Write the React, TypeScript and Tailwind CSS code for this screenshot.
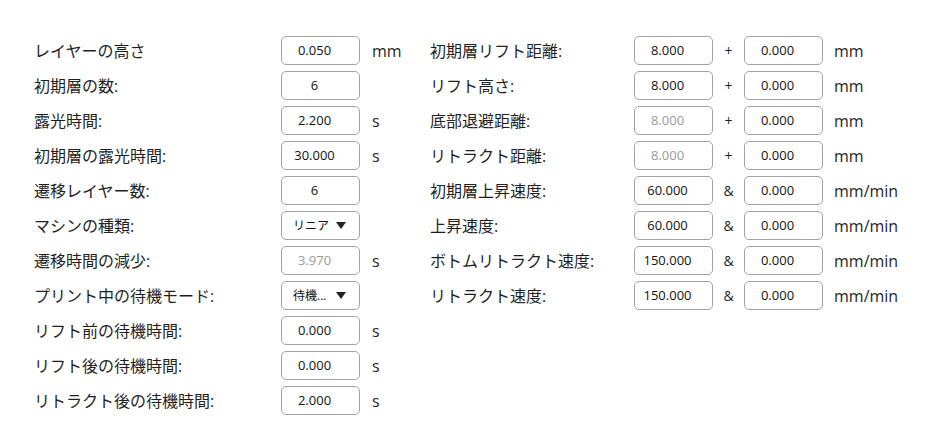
import { ReactNode } from 'react';

const font = { fontFamily: '"Open Sans", "Noto Sans CJK JP", sans-serif' };

type Field = { value: string; disabled?: boolean; select?: boolean };

type LeftRow = { label: string; field: Field; unit?: string };
type RightRow = { label: string; a: Field; op: string; b: Field; unit: string };

const leftRows: LeftRow[] = [
  { label: 'レイヤーの高さ', field: { value: '0.050' }, unit: 'mm' },
  { label: '初期層の数:', field: { value: '6' } },
  { label: '露光時間:', field: { value: '2.200' }, unit: 's' },
  { label: '初期層の露光時間:', field: { value: '30.000' }, unit: 's' },
  { label: '遷移レイヤー数:', field: { value: '6' } },
  { label: 'マシンの種類:', field: { value: 'リニア', select: true } },
  { label: '遷移時間の減少:', field: { value: '3.970', disabled: true }, unit: 's' },
  { label: 'プリント中の待機モード:', field: { value: '待機...', select: true } },
  { label: 'リフト前の待機時間:', field: { value: '0.000' }, unit: 's' },
  { label: 'リフト後の待機時間:', field: { value: '0.000' }, unit: 's' },
  { label: 'リトラクト後の待機時間:', field: { value: '2.000' }, unit: 's' },
];

const rightRows: RightRow[] = [
  { label: '初期層リフト距離:', a: { value: '8.000' }, op: '+', b: { value: '0.000' }, unit: 'mm' },
  { label: 'リフト高さ:', a: { value: '8.000' }, op: '+', b: { value: '0.000' }, unit: 'mm' },
  { label: '底部退避距離:', a: { value: '8.000', disabled: true }, op: '+', b: { value: '0.000' }, unit: 'mm' },
  { label: 'リトラクト距離:', a: { value: '8.000', disabled: true }, op: '+', b: { value: '0.000' }, unit: 'mm' },
  { label: '初期層上昇速度:', a: { value: '60.000' }, op: '&', b: { value: '0.000' }, unit: 'mm/min' },
  { label: '上昇速度:', a: { value: '60.000' }, op: '&', b: { value: '0.000' }, unit: 'mm/min' },
  { label: 'ボトムリトラクト速度:', a: { value: '150.000' }, op: '&', b: { value: '0.000' }, unit: 'mm/min' },
  { label: 'リトラクト速度:', a: { value: '150.000' }, op: '&', b: { value: '0.000' }, unit: 'mm/min' },
];

function Box({ field }: { field: Field }) {
  if (field.select) {
    return (
      <div className="h-[29px] w-[79px] rounded-[5px] border border-[#a3a3a3] bg-white flex items-center pl-[11px] pr-[13px] text-[12px] text-[#111]">
        <span className="flex-1">{field.value}</span>
        <svg width="10" height="7" viewBox="0 0 10 7">
          <path d="M0 0 H10 L5 7 Z" fill="#222" />
        </svg>
      </div>
    );
  }
  return (
    <div
      className={`h-[29px] w-[79px] rounded-[5px] border border-[#a3a3a3] bg-white flex items-center justify-center pr-[12px] text-[13px] ${
        field.disabled ? 'text-[#9a9a9a]' : 'text-[#111]'
      }`}
    >
      {field.value}
    </div>
  );
}

function Row({ children }: { children: ReactNode }) {
  return <div className="flex items-center h-[29px]">{children}</div>;
}

export default function App() {
  return (
    <div className="min-h-screen bg-white text-[#1f1f1f]" style={font}>
      <div className="flex pl-[34px] pt-[36px]">
        {/* Left column */}
        <div className="w-[396px] flex flex-col gap-[6px]">
          {leftRows.map((r) => (
            <Row key={r.label}>
              <div className="w-[247px] text-[16px]">{r.label}</div>
              <Box field={r.field} />
              {r.unit && <div className="ml-[12px] text-[16px]">{r.unit}</div>}
            </Row>
          ))}
        </div>

        {/* Right column */}
        <div className="flex flex-col gap-[6px]">
          {rightRows.map((r) => (
            <Row key={r.label}>
              <div className="w-[204px] text-[16px]">{r.label}</div>
              <Box field={r.a} />
              <div className="w-[31px] text-center text-[14px]">{r.op}</div>
              <Box field={r.b} />
              <div className="ml-[11px] text-[16px]">{r.unit}</div>
            </Row>
          ))}
        </div>
      </div>
    </div>
  );
}
